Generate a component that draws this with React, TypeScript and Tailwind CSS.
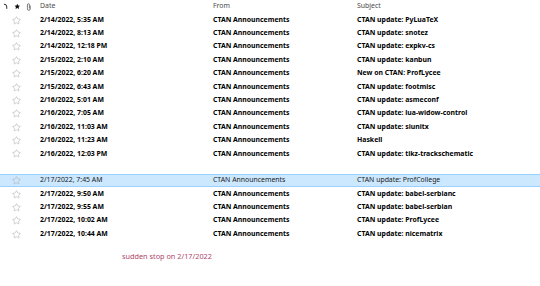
import React from "react";
import { Star } from "lucide-react";

interface Message {
  date: string;
  subject: string;
  unread: boolean;
  selected?: boolean;
}

const before: Message[] = [
  { date: "2/14/2022, 5:35 AM", subject: "CTAN update: PyLuaTeX", unread: true },
  { date: "2/14/2022, 8:13 AM", subject: "CTAN update: snotez", unread: true },
  { date: "2/14/2022, 12:18 PM", subject: "CTAN update: expkv-cs", unread: true },
  { date: "2/15/2022, 2:10 AM", subject: "CTAN update: kanbun", unread: true },
  { date: "2/15/2022, 6:20 AM", subject: "New on CTAN: ProfLycee", unread: true },
  { date: "2/15/2022, 6:43 AM", subject: "CTAN update: footmisc", unread: true },
  { date: "2/16/2022, 5:01 AM", subject: "CTAN update: asmeconf", unread: true },
  { date: "2/16/2022, 7:05 AM", subject: "CTAN update: lua-widow-control", unread: true },
  { date: "2/16/2022, 11:03 AM", subject: "CTAN update: siunitx", unread: true },
  { date: "2/16/2022, 11:23 AM", subject: "Haskell", unread: true },
  { date: "2/16/2022, 12:03 PM", subject: "CTAN update: tikz-trackschematic", unread: true },
];

const after: Message[] = [
  { date: "2/17/2022, 7:45 AM", subject: "CTAN update: ProfCollege", unread: false, selected: true },
  { date: "2/17/2022, 9:50 AM", subject: "CTAN update: babel-serbianc", unread: true },
  { date: "2/17/2022, 9:55 AM", subject: "CTAN update: babel-serbian", unread: true },
  { date: "2/17/2022, 10:02 AM", subject: "CTAN update: ProfLycee", unread: true },
  { date: "2/17/2022, 10:44 AM", subject: "CTAN update: nicematrix", unread: true },
];

const Row = ({ msg }: { msg: Message }) => (
  <div
    className={`flex items-center h-[13.4px] ${
      msg.selected ? "bg-[#cce8ff] border-y border-[#99d1ff]" : ""
    } ${msg.unread ? "font-bold text-black" : "text-[#1a1a1a]"}`}
  >
    <div className="w-[32px] flex justify-center pl-[1px]">
      <Star size={9} strokeWidth={1.6} className="text-[#b0b0b0]" />
    </div>
    <div className="w-[181px] pl-[8px] whitespace-nowrap">{msg.date}</div>
    <div className="w-[144px] whitespace-nowrap">CTAN Announcements</div>
    <div className="flex-1 whitespace-nowrap">{msg.subject}</div>
  </div>
);

export default function App() {
  return (
    <div
      className="w-[540px] h-[286px] bg-white text-[6.9px] leading-none overflow-hidden"
      style={{ fontFamily: '"Noto Sans", "Open Sans", sans-serif' }}
    >
      {/* Header */}
      <div className="flex items-center h-[13.4px]">
        <div className="w-[32px] flex items-center gap-[6px] pl-[3px]">
          <svg width="5" height="7" viewBox="0 0 5 7">
            <path d="M1 1 Q4 1 4 4 L4 6" stroke="#222" strokeWidth="1" fill="none" />
          </svg>
          <svg width="7" height="7" viewBox="0 0 24 24">
            <path
              d="M12 2l3.1 6.3 6.9 1-5 4.9 1.2 6.8L12 17.8 5.8 21l1.2-6.8-5-4.9 6.9-1z"
              fill="#111"
            />
          </svg>
          <svg width="6" height="8" viewBox="0 0 6 8">
            <path
              d="M4.5 2.5 L4.5 6 Q4.5 7.5 3 7.5 Q1.5 7.5 1.5 6 L1.5 1.8 Q1.5 0.5 2.6 0.5 Q3.6 0.5 3.6 1.8 L3.6 5.6"
              stroke="#555"
              strokeWidth="0.8"
              fill="none"
            />
          </svg>
        </div>
        <div className="w-[181px] pl-[8px] text-[#4a4a4a]">Date</div>
        <div className="w-[144px] text-[#4a4a4a]">From</div>
        <div className="flex-1 text-[#4a4a4a]">Subject</div>
      </div>

      {before.map((m) => (
        <Row key={m.date} msg={m} />
      ))}
      <div className="h-[13.4px]" />
      {after.map((m) => (
        <Row key={m.date} msg={m} />
      ))}

      <div className="pl-[122px] pt-[12px] text-[#b0466a] text-[7.3px]">
        sudden stop on 2/17/2022
      </div>
    </div>
  );
}
